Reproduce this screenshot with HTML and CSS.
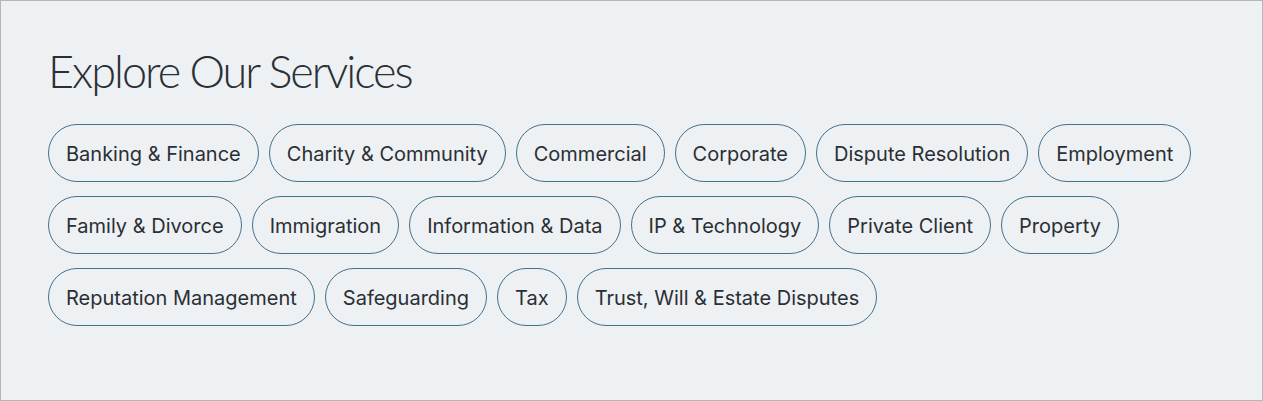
FILE: index.html
```html
<!DOCTYPE html>
<html lang="en">
<head>
<meta charset="utf-8">
<title>Explore Our Services</title>
<link rel="stylesheet" href="styles.css">
</head>
<body>
<section class="services">
  <h2 class="services__title">Explore Our Services</h2>
  <ul class="services__list">
    <li><a class="pill" href="#">Banking &amp; Finance</a></li>
    <li><a class="pill" href="#">Charity &amp; Community</a></li>
    <li><a class="pill" href="#">Commercial</a></li>
    <li><a class="pill" href="#">Corporate</a></li>
    <li><a class="pill" href="#">Dispute Resolution</a></li>
    <li><a class="pill" href="#">Employment</a></li>
    <li><a class="pill" href="#">Family &amp; Divorce</a></li>
    <li><a class="pill" href="#">Immigration</a></li>
    <li><a class="pill" href="#">Information &amp; Data</a></li>
    <li><a class="pill" href="#">IP &amp; Technology</a></li>
    <li><a class="pill" href="#">Private Client</a></li>
    <li><a class="pill" href="#">Property</a></li>
    <li><a class="pill" href="#">Reputation Management</a></li>
    <li><a class="pill" href="#">Safeguarding</a></li>
    <li><a class="pill" href="#">Tax</a></li>
    <li><a class="pill" href="#">Trust, Will &amp; Estate Disputes</a></li>
  </ul>
</section>
</body>
</html>
```
FILE: styles.css
```css
html, body {
  margin: 0;
  padding: 0;
}
body {
  background: #edf1f4;
  font-family: "Inter", "Noto Sans", sans-serif;
  color: #2b2f33;
}
.services {
  box-sizing: border-box;
  height: 401px;
  border: 1px solid #b6b6b6;
  background: #edf1f4;
  padding: 42px 47px 0 47px;
}
.services__title {
  margin: 0 0 25px 0;
  font-family: "Lato", sans-serif;
  font-weight: 300;
  font-size: 45px;
  line-height: 56px;
  color: #2b2f33;
  letter-spacing: -2px;
}
.services__list {
  list-style: none;
  margin: 0;
  padding: 0;
  display: flex;
  flex-wrap: wrap;
  gap: 14px 10px;
  max-width: 1160px;
}
.pill {
  display: flex;
  align-items: center;
  box-sizing: border-box;
  height: 58px;
  padding: 2px 17px 0;
  border: 1px solid #44708f;
  border-radius: 29px;
  font-size: 20px;
  color: #2b2f33;
  text-decoration: none;
  white-space: nowrap;
}
```
